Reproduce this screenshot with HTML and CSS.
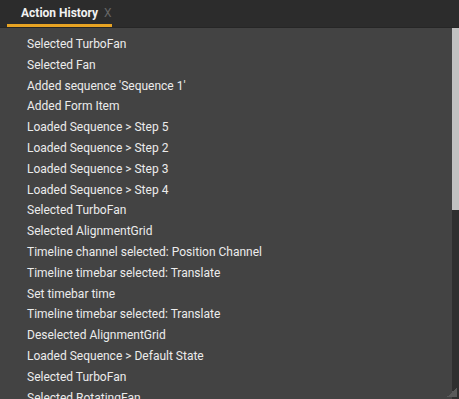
FILE: index.html
```
<!DOCTYPE html>
<html>
<head>
  <title>Action History</title>
  <meta name="viewport" content="width=device-width, initial-scale=1.0">
  <link rel="stylesheet" href="styles.css">
</head>
<body>
  <div class="panel">
    <div class="tabs">
      <div class="tab active">
        <span class="tab-title">Action History</span>
        <span class="tab-close">X</span>
      </div>
    </div>
    <div class="body">
      <ul class="history">
        <li>Selected TurboFan</li>
        <li>Selected Fan</li>
        <li>Added sequence 'Sequence 1'</li>
        <li>Added Form Item</li>
        <li>Loaded Sequence &gt; Step 5</li>
        <li>Loaded Sequence &gt; Step 2</li>
        <li>Loaded Sequence &gt; Step 3</li>
        <li>Loaded Sequence &gt; Step 4</li>
        <li>Selected TurboFan</li>
        <li>Selected AlignmentGrid</li>
        <li>Timeline channel selected: Position Channel</li>
        <li>Timeline timebar selected: Translate</li>
        <li>Set timebar time</li>
        <li>Timeline timebar selected: Translate</li>
        <li>Deselected AlignmentGrid</li>
        <li>Loaded Sequence &gt; Default State</li>
        <li>Selected TurboFan</li>
        <li>Selected RotatingFan</li>
      </ul>
      <div class="scrollbar">
        <div class="thumb"></div>
      </div>
      <div class="grip"></div>
    </div>
  </div>
</body>
</html>
```

FILE: styles.css
```
* {
  box-sizing: border-box;
}

html, body {
  margin: 0;
  height: 100%;
}

body {
  font-family: Roboto, "Noto Sans", Arial, sans-serif;
  background-color: #434343;
  overflow: hidden;
}

.panel {
  display: flex;
  flex-direction: column;
  height: 100%;
}

.tabs {
  display: flex;
  height: 28px;
  background-color: #2c2c2c;
  border-bottom: 1px solid #262626;
  padding-left: 7px;
}

.tab {
  display: flex;
  align-items: center;
  gap: 6px;
  padding: 0 0 0 14px;
  width: 105px;
  font-size: 12px;
  border-bottom: 3px solid #e7a323;
  padding-top: 2px;
}

.tab-title {
  color: #f2f2f2;
  font-weight: bold;
}

.tab-close {
  color: #666;
  font-size: 12px;
}

.body {
  position: relative;
  flex: 1;
  display: flex;
  overflow: hidden;
}

.history {
  flex: 1;
  list-style: none;
  margin: 0;
  padding: 6px 0 0 27px;
}

.history li {
  height: 20.8px;
  line-height: 20.8px;
  font-size: 12px;
  color: #ececec;
  white-space: nowrap;
}

.scrollbar {
  width: 7px;
  background-color: #2f2f2f;
}

.thumb {
  height: 182px;
  background-color: #c1c1c1;
}

/* resize grip in the corner */
.grip {
  position: absolute;
  right: 2px;
  bottom: 2px;
  width: 10px;
  height: 10px;
  background: linear-gradient(135deg, transparent 50%, #5a5a5a 50%);
}
```
